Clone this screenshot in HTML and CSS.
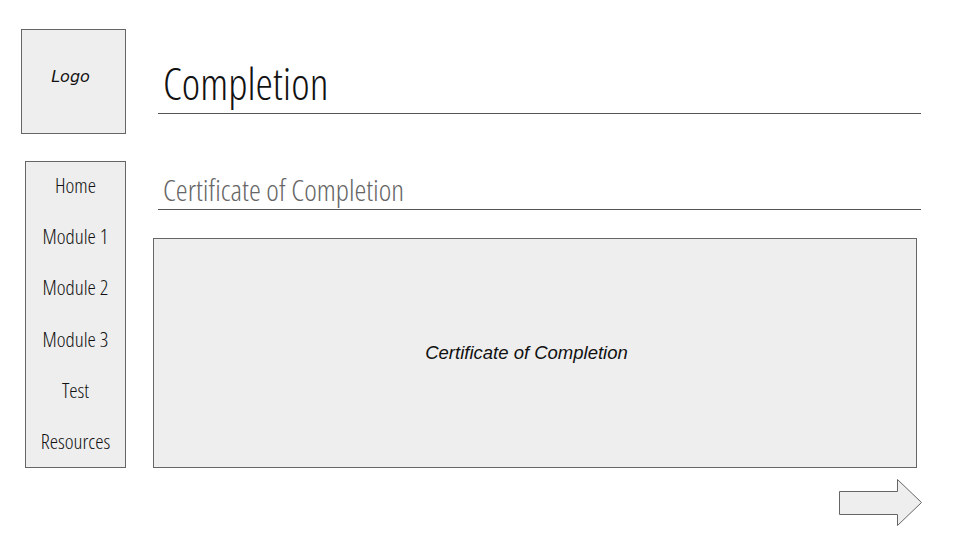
FILE: index.html
```html
<!DOCTYPE html>
<html>
<head>
<meta charset="utf-8">
<link rel="stylesheet" href="styles.css">
</head>
<body>
<div class="page">
  <div class="logo"><span>Logo</span></div>
  <div class="title-block"><h1 class="title">Completion</h1></div>
  <nav class="nav">
    <a class="nav-item">Home</a>
    <a class="nav-item">Module 1</a>
    <a class="nav-item">Module 2</a>
    <a class="nav-item">Module 3</a>
    <a class="nav-item">Test</a>
    <a class="nav-item">Resources</a>
  </nav>
  <main class="main">
    <h2 class="subtitle">Certificate of Completion</h2>
    <div class="cert"><span>Certificate of Completion</span></div>
  </main>
  <div></div>
  <div class="footer">
    <svg class="arrow" width="84" height="48" viewBox="0 0 84 48">
      <polygon points="0.5,12.5 58.5,12.5 58.5,0.5 82.5,23.5 58.5,46.5 58.5,35.5 0.5,35.5" fill="#eeeeee" stroke="#666" stroke-width="1"/>
    </svg>
  </div>
</div>
</body>
</html>
```

FILE: styles.css
```css
html, body {
  margin: 0;
  padding: 0;
  background: #fff;
}
.page {
  display: grid;
  grid-template-columns: 105px 768px;
  column-gap: 27px;
  row-gap: 27px;
  padding: 29px 0 0 21px;
  font-family: "Open Sans", sans-serif;
}
.logo {
  box-sizing: border-box;
  width: 105px;
  height: 105px;
  background: #eeeeee;
  border: 1px solid #666;
  display: flex;
  align-items: center;
  justify-content: center;
}
.logo span {
  font-family: "DejaVu Sans", sans-serif;
  font-style: italic;
  font-size: 16px;
  color: #111;
  margin-top: -10px;
  margin-right: 6px;
}
.title-block {
  align-self: start;
  height: 84px;
  margin-left: 5px;
  border-bottom: 1px solid #555;
  display: flex;
  align-items: flex-end;
}
.title {
  margin: 0 0 5px 5px;
  font-family: "Open Sans", sans-serif;
  font-stretch: 75%;
  font-weight: 300;
  font-size: 44px;
  line-height: 50px;
  color: #111;
}
.nav {
  box-sizing: border-box;
  margin-left: 4px;
  width: 101px;
  height: 307px;
  background: #eeeeee;
  border: 1px solid #666;
  display: flex;
  flex-direction: column;
  align-items: center;
  padding-top: 8px;
  gap: 21.2px;
}
.nav-item {
  font-family: "Open Sans", sans-serif;
  font-stretch: 75%;
  font-weight: 300;
  font-size: 21px;
  line-height: 30px;
  color: #111;
}
.main {
  display: flex;
  flex-direction: column;
}
.subtitle {
  margin: 0 0 0 5px;
  padding: 12px 0 0 5px;
  height: 36px;
  border-bottom: 1px solid #555;
  font-family: "Open Sans", sans-serif;
  font-stretch: 75%;
  font-weight: 300;
  font-size: 30px;
  line-height: 34px;
  color: #666;
}
.cert {
  box-sizing: border-box;
  margin-top: 28px;
  width: 764px;
  height: 230px;
  background: #eeeeee;
  border: 1px solid #666;
  display: flex;
  align-items: center;
  justify-content: center;
}
.cert span {
  font-family: "Liberation Sans", Arial, sans-serif;
  font-style: italic;
  font-size: 18.5px;
  color: #111;
  margin-top: -1px;
  margin-right: 17px;
}
.footer {
  display: flex;
  justify-content: flex-end;
  margin-top: -16px;
}
.arrow {
  display: block;
  margin-right: -2px;
}
```
